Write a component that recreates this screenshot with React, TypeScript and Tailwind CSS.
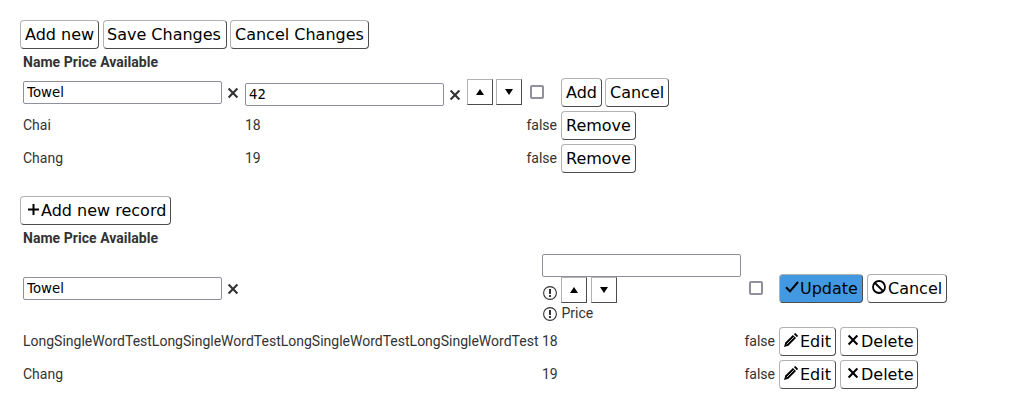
import type { ReactNode } from 'react';
import clsx from 'clsx';

function Button({ children, className }: { children: ReactNode; className: string }) {
  return (
    <button
      className={clsx(
        "flex h-[29px] shrink-0 items-center whitespace-nowrap rounded-[4px] border border-b-[#4c4c4c] border-l-[#b2b2b2] border-r-[#4c4c4c] border-t-[#b2b2b2] font-['DejaVu_Sans',sans-serif] text-[16px] leading-[19px] text-black",
        className,
      )}
    >
      {children}
    </button>
  );
}

function TextInput({ value, className }: { value: string; className?: string }) {
  return (
    <input
      type="text"
      defaultValue={value}
      className={clsx(
        "block h-[23px] w-[199px] shrink-0 rounded-[2px] border border-[#8f8f9d] bg-white px-[3px] py-0 font-['DejaVu_Sans',sans-serif] text-[13.3333px] leading-[17px] text-black",
        className,
      )}
    />
  );
}

function SpinButton({ down }: { down?: boolean }) {
  return (
    <button className="flex size-[26px] shrink-0 items-center justify-center border border-b-[#4c4c4c] border-l-[#b2b2b2] border-r-[#4c4c4c] border-t-[#b2b2b2]">
      <svg width="8" height="6" viewBox="0 0 8 6">
        <path d={down ? 'M0 0h8L4 6z' : 'M0 6h8L4 0z'} />
      </svg>
    </button>
  );
}

function Cross({ className }: { className?: string }) {
  return (
    <svg className={clsx('shrink-0 overflow-visible', className)} width="10" height="10" viewBox="0 0 10 10">
      <path d="M.6.6l8.8 8.8M9.4.6L.6 9.4" stroke="currentColor" strokeWidth="2.1" />
    </svg>
  );
}

function Warning() {
  return (
    <svg className="shrink-0" width="14" height="14" viewBox="0 0 14 14">
      <circle cx="7" cy="7" r="6.4" fill="none" stroke="currentColor" strokeWidth="1.1" />
      <path d="M6 3h2v5H6zM6 9h2v2H6z" fill="currentColor" />
    </svg>
  );
}

function Pencil() {
  return (
    <svg className="mb-[3px] mr-[2px] shrink-0" width="14" height="14" viewBox="0 0 14 14">
      <path d="M0 14L1.3 9.6 8.9 2l3.1 3.1L4.4 12.7z" />
      <path d="M9.8 1.1L10.6.4Q11.2-.2 11.8.4l1.8 1.8q.6.6 0 1.2l-.7.8z" />
      <path d="M2.7 11.3l7.2-7.2" stroke="#ddd" strokeWidth=".9" />
    </svg>
  );
}

function Checkbox() {
  return (
    <input
      type="checkbox"
      className="block size-[14px] shrink-0 appearance-none rounded-[2px] border-2 border-[#8f8f9d] bg-white"
    />
  );
}

function Header() {
  return (
    <div className="flex h-[26px] items-center pl-[3px] font-bold tracking-[0.04px]">
      Name Price Available
    </div>
  );
}

function SimpleRow({ name, price }: { name: string; price: number }) {
  return (
    <div className="flex h-[33px] items-center pl-[3px]">
      <span className="mb-[2px] w-[222px]">{name}</span>
      <span className="mb-[2px] w-[262px]">{price}</span>
      <span className="mb-[2px] w-[50px] text-right">false</span>
      <Button className="ml-[4px] w-[75px] pl-[4px]">Remove</Button>
    </div>
  );
}

function EditableRow({ name, price }: { name: string; price: number }) {
  return (
    <div className="flex h-[33px] items-center pl-[3px]">
      <span className="mb-[2px] w-[519px] whitespace-nowrap">{name}</span>
      <span className="mb-[2px] w-[183px]">{price}</span>
      <span className="mb-[2px] w-[50px] text-right">false</span>
      <Button className="ml-[4px] w-[57px] pl-[4px]">
        <Pencil />
        Edit
      </Button>
      <Button className="ml-[4px] w-[78px] pl-[4px]">
        <Cross className="mb-[3px] ml-[2.5px] mr-[3.5px]" />
        Delete
      </Button>
    </div>
  );
}

export default function App() {
  return (
    <main className="h-[412px] w-[1024px] overflow-hidden bg-white pl-[20px] pt-[20px] font-[Roboto,sans-serif] text-[14px] leading-[20px] text-[#333]">
      <section>
        <div className="flex">
          <Button className="w-[79px] pl-[4px]">Add new</Button>
          <Button className="ml-[4px] w-[124px] pl-[3px]">Save Changes</Button>
          <Button className="ml-[3px] w-[139px] pl-[4px]">Cancel Changes</Button>
        </div>
        <Header />
        <div className="flex h-[34px] items-center pl-[3px]">
          <TextInput value="Towel" />
          <Cross className="ml-[6px] mt-px" />
          <TextInput value="42" className="ml-[7px] mt-[4px]" />
          <Cross className="ml-[6px] mt-[5px]" />
          <div className="ml-[7px] flex gap-[3px]">
            <SpinButton />
            <SpinButton down />
          </div>
          <div className="ml-[8px]">
            <Checkbox />
          </div>
          <Button className="ml-[17px] w-[41px] pl-[4px]">Add</Button>
          <Button className="ml-[3px] w-[64px] pl-[4px]">Cancel</Button>
        </div>
        <SimpleRow name="Chai" price={18} />
        <SimpleRow name="Chang" price={19} />
      </section>
      <section className="mt-[21px]">
        <Button className="w-[151px] pl-[4px]">
          <svg className="mb-[3px] ml-[3px] mr-[2px] shrink-0" width="11" height="11" viewBox="0 0 11 11">
            <path d="M5.5 0v11M0 5.5h11" stroke="currentColor" strokeWidth="2" />
          </svg>
          Add new record
        </Button>
        <Header />
        <div className="flex h-[74px] items-center pl-[3px]">
          <TextInput value="Towel" />
          <Cross className="ml-[6px] mt-px" />
          <div className="ml-[304px] w-[199px] self-start pt-[3px]">
            <TextInput value="" />
            <div className="flex h-[26px] items-center">
              <div className="ml-px mt-[6px]">
                <Warning />
              </div>
              <div className="ml-[4px] flex gap-[4px]">
                <SpinButton />
                <SpinButton down />
              </div>
            </div>
            <div className="flex h-[20px] items-center gap-[4.5px] pl-px">
              <div className="mt-[2px]">
                <Warning />
              </div>
              <span>Price</span>
            </div>
          </div>
          <div className="ml-[8px]">
            <Checkbox />
          </div>
          <Button className="ml-[16px] w-[84px] bg-[#4299e1] pl-[4px]">
            <svg className="mb-[2px] ml-px mr-px shrink-0" width="14" height="12" viewBox="0 0 14 12">
              <path d="M1 6.3l4 4L13 1" fill="none" stroke="currentColor" strokeWidth="2" />
            </svg>
            Update
          </Button>
          <Button className="ml-[4px] w-[80px] pl-[4px]">
            <svg className="mb-[3px] mr-[2px] shrink-0" width="14" height="14" viewBox="0 0 14 14">
              <circle cx="7" cy="7" r="6" fill="none" stroke="currentColor" strokeWidth="1.8" />
              <path d="M3 3l8 8" stroke="currentColor" strokeWidth="1.8" />
            </svg>
            Cancel
          </Button>
        </div>
        <EditableRow name="LongSingleWordTestLongSingleWordTestLongSingleWordTestLongSingleWordTest" price={18} />
        <EditableRow name="Chang" price={19} />
      </section>
    </main>
  );
}
